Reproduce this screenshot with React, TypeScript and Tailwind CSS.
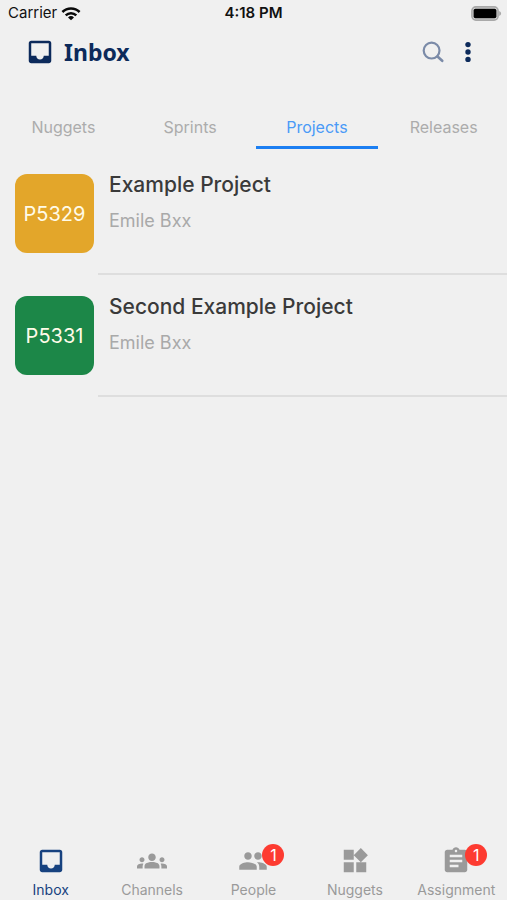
import { useState } from 'react';
import type { IconType } from 'react-icons';
import { MdAssignment, MdGroups, MdInbox, MdPeople, MdWidgets } from 'react-icons/md';

const tabs = ['Nuggets', 'Sprints', 'Projects', 'Releases'];

const projects = [
  { code: 'P5329', title: 'Example Project', owner: 'Emile Bxx', color: 'bg-[#e3a62a]' },
  { code: 'P5331', title: 'Second Example Project', owner: 'Emile Bxx', color: 'bg-[#1c8748]' },
];

const navItems: { label: string; Icon: IconType; badge?: number }[] = [
  { label: 'Inbox', Icon: MdInbox },
  { label: 'Channels', Icon: MdGroups },
  { label: 'People', Icon: MdPeople, badge: 1 },
  { label: 'Nuggets', Icon: MdWidgets },
  { label: 'Assignment', Icon: MdAssignment, badge: 1 },
];

function WifiIcon() {
  return (
    <svg width="20" height="14" viewBox="0 0 20 14" fill="none" stroke="#0a0a0a" strokeWidth="2.5" aria-hidden="true">
      <path d="M1.4 5a12.3 12.3 0 0 1 17.2 0" />
      <path d="M4.7 8.3a7.6 7.6 0 0 1 10.6 0" />
      <path d="M10 13.3 7 10.4a4.4 4.4 0 0 1 6 0z" fill="#0a0a0a" stroke="none" />
    </svg>
  );
}

function BatteryIcon() {
  return (
    <svg width="32" height="15" viewBox="0 0 32 15" aria-hidden="true">
      <rect x="0.9" y="0.9" width="26.2" height="13.2" rx="4" fill="#d4d4d4" stroke="#a9a9a9" strokeWidth="1.6" />
      <rect x="2.6" y="2.8" width="22.8" height="9.4" rx="1.8" fill="#000" />
      <path d="M28.200 5v5c1.100-.4 1.900-1.300 1.900-2.500s-.8-2.100-1.900-2.500z" fill="#a9a9a9" />
    </svg>
  );
}

function StatusBar() {
  return (
    <div className="grid h-[27px] grid-cols-[1fr_auto_1fr] items-center pr-1 pl-2 text-[#111]">
      <div className="flex items-center gap-1 text-[15px]">
        Carrier
        <WifiIcon />
      </div>
      <div className="pr-1 text-center text-[15px] font-semibold">4:18 PM</div>
      <div className="flex justify-end">
        <BatteryIcon />
      </div>
    </div>
  );
}

function Header() {
  return (
    <header className="flex h-[49px] items-center justify-between pr-7 pl-[25px]">
      <div className="flex items-center gap-[9px] text-[#0c2a5b]">
        <MdInbox size={30} />
        <h1 className="font-['Noto_Sans',sans-serif] text-[23px]/8 font-bold">Inbox</h1>
      </div>
      <div className="flex items-center gap-[13px]">
        <button type="button" aria-label="Search">
          <svg width="22" height="22" viewBox="0 0 22 22" fill="none" stroke="#7b8ba8" strokeWidth="2.2" strokeLinecap="round">
            <circle cx="9.6" cy="9.6" r="7.9" />
            <path d="m15.5 15.5 4.7 4.3" strokeWidth="2.6" />
          </svg>
        </button>
        <button type="button" aria-label="More options">
          <svg width="22" height="22" viewBox="0 0 22 22" fill="#0c2a5b">
            <circle cx="11" cy="3.6" r="2.7" />
            <circle cx="11" cy="11" r="2.7" />
            <circle cx="11" cy="18.4" r="2.7" />
          </svg>
        </button>
      </div>
    </header>
  );
}

export default function App() {
  const [activeTab, setActiveTab] = useState('Projects');
  const [activeNav, setActiveNav] = useState(0);

  return (
    <div className="flex min-h-screen flex-col bg-[#f0f0f0] font-['Inter','Liberation_Sans',sans-serif]">
      <StatusBar />
      <Header />

      <div role="tablist" className="mt-7 grid grid-cols-4">
        {tabs.map((tab) => (
          <button
            key={tab}
            type="button"
            role="tab"
            aria-selected={tab === activeTab}
            onClick={() => setActiveTab(tab)}
            className={`mx-0.5 h-[45px] border-b-3 pt-1 text-base ${
              tab === activeTab ? 'border-[#1c7ff2] text-[#4a9af7]' : 'border-transparent text-[#acacac]'
            }`}
          >
            {tab}
          </button>
        ))}
      </div>

      <main className="flex-1 pt-1">
        <ul>
          {projects.map((project) => (
            <li key={project.code} className="flex h-[122px] pl-[15px]">
              <div
                className={`mt-[21px] mr-1 flex size-[79px] shrink-0 items-center justify-center rounded-xl text-xl text-[#fffbe8] ${project.color}`}
              >
                {project.code}
              </div>
              <div className="min-w-0 flex-1 border-b-2 border-[#dedede] pt-[18px] pl-[11px]">
                <h2 className="text-[21px]/7 font-medium text-[#3a3a3a]">{project.title}</h2>
                <p className="mt-2 text-lg/7 text-[#a9a9a9]">{project.owner}</p>
              </div>
            </li>
          ))}
        </ul>
      </main>

      <nav className="grid grid-cols-5">
        {navItems.map(({ label, Icon, badge }, index) => (
          <button
            key={label}
            type="button"
            onClick={() => setActiveNav(index)}
            className={`flex flex-col items-center gap-1 ${index === activeNav ? 'text-[#17427f]' : 'text-[#9a9a9a]'}`}
          >
            <span className="relative">
              <Icon size={30} />
              {badge !== undefined && (
                <span className="absolute -top-0.5 left-6 flex size-[22px] items-center justify-center rounded-full bg-[#fd3b31] text-base text-white">
                  {badge}
                </span>
              )}
            </span>
            <span className="text-sm/5">{label}</span>
          </button>
        ))}
      </nav>
    </div>
  );
}
